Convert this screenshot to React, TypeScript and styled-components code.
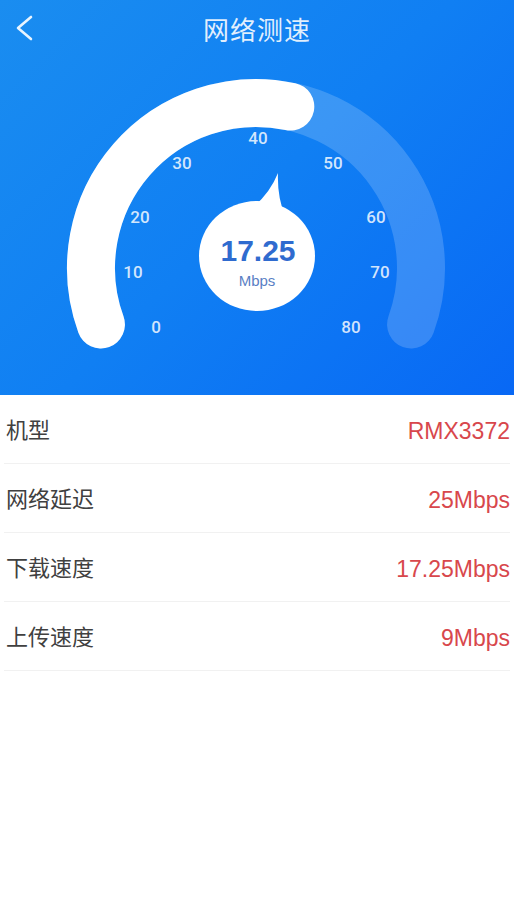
import React from "react";
import styled, { createGlobalStyle } from "styled-components";

const Global = createGlobalStyle`
  html, body { margin: 0; padding: 0; background: #ffffff; }
  body { font-family: "Noto Sans CJK SC", "Noto Sans", sans-serif; }
  * { box-sizing: border-box; }
`;

const Page = styled.div`
  width: 514px;
  min-height: 914px;
  background: #ffffff;
`;

const Header = styled.header`
  height: 395px;
  display: flex;
  flex-direction: column;
  background: linear-gradient(135deg, #1a8df0 0%, #107ff3 50%, #0868f5 100%);
`;

const TopBar = styled.div`
  height: 56px;
  display: grid;
  grid-template-columns: 56px 1fr 56px;
  align-items: center;
`;

const BackButton = styled.button`
  border: none;
  background: transparent;
  padding: 0 0 0 14px;
  height: 56px;
  display: flex;
  align-items: center;
  cursor: pointer;
`;

const Title = styled.h1`
  margin: 0;
  text-align: center;
  font-size: 26px;
  font-weight: 400;
  color: rgba(255, 255, 255, 0.88);
  letter-spacing: 1px;
  font-family: "Noto Sans CJK SC", sans-serif;
`;

const GaugeSvg = styled.svg`
  display: block;
  width: 514px;
  height: 339px;
`;

const List = styled.ul`
  list-style: none;
  margin: 0;
  padding: 0 4px 0 4px;
`;

const Row = styled.li`
  height: 69px;
  display: flex;
  align-items: center;
  justify-content: space-between;
  border-bottom: 1px solid #f1f1f1;
  padding: 0 0 2px 2px;
`;

const Label = styled.span`
  font-size: 22px;
  color: #404040;
  font-family: "Noto Sans CJK SC", sans-serif;
`;

const Value = styled.span`
  font-size: 23px;
  margin-top: 6px;
  color: #d8474c;
  font-family: "Liberation Sans", Arial, sans-serif;
`;

const CX = 256;
const CY = 268;
const R = 165;

const pt = (deg: number) => {
  const a = (deg * Math.PI) / 180;
  return [CX + R * Math.cos(a), CY - R * Math.sin(a)];
};

const ticks: [string, number, number][] = [
  ["0", 156, 327],
  ["10", 133, 272],
  ["20", 140, 217],
  ["30", 182, 163],
  ["40", 258, 138],
  ["50", 333, 163],
  ["60", 376, 217],
  ["70", 380, 272],
  ["80", 351, 327],
];

const rows = [
  ["机型", "RMX3372"],
  ["网络延迟", "25Mbps"],
  ["下载速度", "17.25Mbps"],
  ["上传速度", "9Mbps"],
];

function Gauge() {
  const [sx, sy] = pt(200);
  const [ex, ey] = pt(-20);
  const [wx, wy] = pt(78);
  return (
    <GaugeSvg viewBox="0 56 514 339">
      <path
        d={`M ${sx} ${sy} A ${R} ${R} 0 1 1 ${ex} ${ey}`}
        fill="none"
        stroke="rgba(255,255,255,0.18)"
        strokeWidth={48}
        strokeLinecap="round"
      />
      <path
        d={`M ${sx} ${sy} A ${R} ${R} 0 0 1 ${wx} ${wy}`}
        fill="none"
        stroke="#ffffff"
        strokeWidth={48}
        strokeLinecap="round"
      />
      {ticks.map(([t, x, y]) => (
        <text
          key={t}
          x={x}
          y={y}
          textAnchor="middle"
          dominantBaseline="central"
          fill="rgba(255,255,255,0.82)"
          fontSize={17}
          fontWeight={500}
          fontFamily="Roboto, 'Liberation Sans', sans-serif"
        >
          {t}
        </text>
      ))}
      <path d="M 244 214 Q 268 198 278 173 Q 277 196 285 216 Z" fill="#ffffff" />
      <ellipse cx={257} cy={256} rx={58} ry={55} fill="#ffffff" />
      <text
        x={258}
        y={250}
        textAnchor="middle"
        dominantBaseline="central"
        fill="#2f6bcf"
        fontSize={30}
        fontWeight={700}
        fontFamily="'Liberation Sans', Arial, sans-serif"
      >
        17.25
      </text>
      <text
        x={257}
        y={280}
        textAnchor="middle"
        dominantBaseline="central"
        fill="#5a80c4"
        fontSize={15}
        fontFamily="'Liberation Sans', Arial, sans-serif"
      >
        Mbps
      </text>
    </GaugeSvg>
  );
}

export default function App() {
  return (
    <Page>
      <Global />
      <Header>
        <TopBar>
          <BackButton aria-label="返回">
            <svg width="22" height="28" viewBox="0 0 22 28">
              <path
                d="M 17 3 L 4 14 L 17 25"
                fill="none"
                stroke="rgba(255,255,255,0.9)"
                strokeWidth={2.6}
                strokeLinecap="round"
                strokeLinejoin="round"
              />
            </svg>
          </BackButton>
          <Title>网络测速</Title>
          <span />
        </TopBar>
        <Gauge />
      </Header>
      <List>
        {rows.map(([l, v]) => (
          <Row key={l}>
            <Label>{l}</Label>
            <Value>{v}</Value>
          </Row>
        ))}
      </List>
    </Page>
  );
}
